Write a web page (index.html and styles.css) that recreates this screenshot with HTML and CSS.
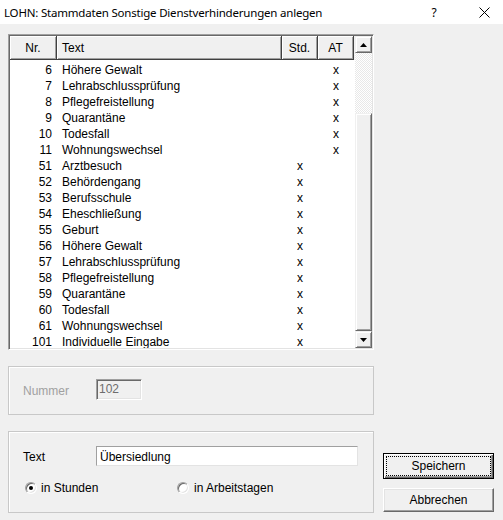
FILE: index.html
```html
<!DOCTYPE html>
<html lang="de">
<head>
<meta charset="utf-8">
<title>LOHN</title>
<link rel="stylesheet" href="styles.css">
</head>
<body>
<div class="titlebar">
  <div class="title">LOHN: Stammdaten Sonstige Dienstverhinderungen anlegen</div>
  <div class="help">?</div>
  <div class="close"><svg width="11" height="11" viewBox="0 0 11 11"><path d="M0.5 0.5 L10.5 10.5 M10.5 0.5 L0.5 10.5" stroke="#000" stroke-width="1" fill="none"/></svg></div>
</div>
<div class="dialog">
  <div class="left">
    <div class="listframe">
      <div class="list">
        <div class="hdr">
          <div class="hc c-nr">Nr.</div>
          <div class="hc c-text">Text</div>
          <div class="hc c-std">Std.</div>
          <div class="hc c-at">AT</div>
        </div>
        <div class="rows">
          <div class="row"><span class="c-nr">6</span><span class="c-text">Höhere Gewalt</span><span class="c-std"></span><span class="c-at">x</span></div>
          <div class="row"><span class="c-nr">7</span><span class="c-text">Lehrabschlussprüfung</span><span class="c-std"></span><span class="c-at">x</span></div>
          <div class="row"><span class="c-nr">8</span><span class="c-text">Pflegefreistellung</span><span class="c-std"></span><span class="c-at">x</span></div>
          <div class="row"><span class="c-nr">9</span><span class="c-text">Quarantäne</span><span class="c-std"></span><span class="c-at">x</span></div>
          <div class="row"><span class="c-nr">10</span><span class="c-text">Todesfall</span><span class="c-std"></span><span class="c-at">x</span></div>
          <div class="row"><span class="c-nr">11</span><span class="c-text">Wohnungswechsel</span><span class="c-std"></span><span class="c-at">x</span></div>
          <div class="row"><span class="c-nr">51</span><span class="c-text">Arztbesuch</span><span class="c-std">x</span><span class="c-at"></span></div>
          <div class="row"><span class="c-nr">52</span><span class="c-text">Behördengang</span><span class="c-std">x</span><span class="c-at"></span></div>
          <div class="row"><span class="c-nr">53</span><span class="c-text">Berufsschule</span><span class="c-std">x</span><span class="c-at"></span></div>
          <div class="row"><span class="c-nr">54</span><span class="c-text">Eheschließung</span><span class="c-std">x</span><span class="c-at"></span></div>
          <div class="row"><span class="c-nr">55</span><span class="c-text">Geburt</span><span class="c-std">x</span><span class="c-at"></span></div>
          <div class="row"><span class="c-nr">56</span><span class="c-text">Höhere Gewalt</span><span class="c-std">x</span><span class="c-at"></span></div>
          <div class="row"><span class="c-nr">57</span><span class="c-text">Lehrabschlussprüfung</span><span class="c-std">x</span><span class="c-at"></span></div>
          <div class="row"><span class="c-nr">58</span><span class="c-text">Pflegefreistellung</span><span class="c-std">x</span><span class="c-at"></span></div>
          <div class="row"><span class="c-nr">59</span><span class="c-text">Quarantäne</span><span class="c-std">x</span><span class="c-at"></span></div>
          <div class="row"><span class="c-nr">60</span><span class="c-text">Todesfall</span><span class="c-std">x</span><span class="c-at"></span></div>
          <div class="row"><span class="c-nr">61</span><span class="c-text">Wohnungswechsel</span><span class="c-std">x</span><span class="c-at"></span></div>
          <div class="row"><span class="c-nr">101</span><span class="c-text">Individuelle Eingabe</span><span class="c-std">x</span><span class="c-at"></span></div>
        </div>
      </div>
      <div class="vscroll">
        <div class="sbtn"><svg width="7" height="4" viewBox="0 0 7 4"><path d="M3.5 0 L7 4 L0 4 Z" fill="#000"/></svg></div>
        <div class="track track-top"></div>
        <div class="thumb"></div>
        <div class="sbtn"><svg width="7" height="4" viewBox="0 0 7 4"><path d="M0 0 L7 0 L3.5 4 Z" fill="#000"/></svg></div>
      </div>
    </div>

    <div class="group group-num">
      <span class="lbl disabled">Nummer</span>
      <div class="field field-num">102</div>
    </div>

    <div class="group group-text">
      <div class="line">
        <span class="lbl">Text</span>
        <div class="field field-text">Übersiedlung</div>
      </div>
      <div class="radios">
        <label class="radio r1"><span class="dot checked"></span>in Stunden</label>
        <label class="radio r2"><span class="dot"></span>in Arbeitstagen</label>
      </div>
    </div>
  </div>

  <div class="right">
    <div class="btn btn-default"><span class="focus">Speichern</span></div>
    <div class="btn">Abbrechen</div>
  </div>
</div>
</body>
</html>
```
FILE: styles.css
```css
html, body {
  margin: 0;
  padding: 0;
}
body {
  width: 503px;
  height: 520px;
  background: #f0f0f0;
  font-family: "Liberation Sans", Arial, sans-serif;
  font-size: 12px;
  color: #000;
  overflow: hidden;
}

.titlebar {
  height: 24px;
  background: #fff;
  display: flex;
  align-items: center;
}
.title {
  flex: 1;
  padding-left: 4px;
  font-family: "Noto Sans", "Liberation Sans", sans-serif;
  font-size: 11.5px;
  letter-spacing: -0.2px;
}
.help {
  width: 46px;
  text-align: center;
  font-family: "Noto Sans", sans-serif;
  font-size: 12px;
  padding-right: 8px;
}
.close {
  width: 38px;
  display: flex;
  justify-content: center;
}

.dialog {
  display: flex;
  padding: 10px 0 0 8px;
  gap: 9px;
}
.left {
  width: 366px;
  display: flex;
  flex-direction: column;
}

/* List */
.listframe {
  height: 316px;
  box-sizing: border-box;
  border-style: solid;
  border-width: 1px;
  border-color: #a0a0a0 #fff #fff #a0a0a0;
  display: flex;
  box-shadow: inset 1px 1px 0 #696969, inset -1px -1px 0 #e3e3e3;
  padding: 1px;
}
.list {
  width: 345px;
  background: #fff;
  display: flex;
  flex-direction: column;
  overflow: hidden;
}
.hdr {
  height: 24px;
  flex: none;
  display: flex;
  background: #f0f0f0;
}
.hc {
  box-sizing: border-box;
  height: 24px;
  line-height: 25px;
  border-right: 1px solid #404040;
  border-bottom: 1px solid #404040;
  box-shadow: inset 1px 1px 0 #fff, inset -1px -1px 0 #a0a0a0;
}
.c-nr { width: 47px; flex: none; box-sizing: border-box; }
.c-text { width: 225px; flex: none; box-sizing: border-box; }
.c-std { width: 36px; flex: none; box-sizing: border-box; text-align: center; }
.c-at { width: 36px; flex: none; box-sizing: border-box; text-align: center; }
.hc.c-nr { text-align: center; }
.hc.c-text { padding-left: 5px; }

.rows {
  flex: 1;
  padding-top: 2px;
  overflow: hidden;
}
.row {
  display: flex;
  height: 16px;
  line-height: 16px;
}
.row .c-nr { text-align: right; padding-right: 5px; }
.row .c-text { padding-left: 5px; }

.vscroll {
  width: 17px;
  display: flex;
  flex-direction: column;
}
.sbtn, .thumb {
  box-sizing: border-box;
  background: #f0f0f0;
  border-style: solid;
  border-width: 1px;
  border-color: #f0f0f0 #696969 #696969 #f0f0f0;
  box-shadow: inset 1px 1px 0 #fff, inset -1px -1px 0 #a0a0a0;
}
.sbtn {
  height: 17px;
  display: flex;
  align-items: center;
  justify-content: center;
}
.track {
  height: 60px;
  background-image: repeating-conic-gradient(#ffffff 0 25%, #e8e8e8 0 50%);
  background-size: 2px 2px;
}
.thumb {
  height: 218px;
}

/* Groups */
.group {
  box-sizing: border-box;
  border: 1px solid #c8c8c8;
  box-shadow: inset 1px 1px 0 #fff;
}
.group-num {
  margin-top: 16px;
  height: 49px;
  display: flex;
  align-items: center;
  padding-left: 14px;
}
.lbl {
  width: 73px;
  flex: none;
}
.disabled {
  color: #a0a0a0;
}
.field {
  box-sizing: border-box;
  border-style: solid;
  border-width: 1px;
  border-color: #a0a0a0 #fff #fff #a0a0a0;
  box-shadow: inset 1px 1px 0 #696969, inset -1px -1px 0 #e3e3e3;
  padding-left: 2px;
}
.field-num {
  width: 46px;
  height: 21px;
  line-height: 19px;
  color: #6d6d6d;
  background: #f0f0f0;
  margin-top: -2px;
}
.group-text {
  margin-top: 16px;
  height: 82px;
  padding: 14px 0 0 14px;
}
.line {
  display: flex;
  align-items: center;
}
.line .lbl {
  padding-top: 2px;
}
.field-text {
  width: 262px;
  height: 20px;
  line-height: 20px;
  background: #fff;
  padding-left: 3px;
  border-color: #a0a0a0 #e3e3e3 #e3e3e3 #a0a0a0;
  box-shadow: none;
}
.radios {
  display: flex;
  margin-top: 14px;
  padding-left: 2px;
}
.radio {
  display: flex;
  align-items: center;
  height: 16px;
}
.r1 { width: 152px; }
.dot {
  width: 12px;
  height: 12px;
  box-sizing: border-box;
  border-radius: 50%;
  background: #fff;
  border: 1px solid;
  border-color: #a0a0a0 #fff #fff #a0a0a0;
  box-shadow: inset 1px 1px 0 #696969, inset -1px -1px 0 #e3e3e3;
  margin-right: 4px;
  display: flex;
  align-items: center;
  justify-content: center;
}
.r2 .dot { margin-right: 5px; }
.dot.checked::after {
  content: "";
  width: 4px;
  height: 4px;
  border-radius: 50%;
  background: #000;
}

/* Buttons */
.right {
  width: 111px;
  display: flex;
  flex-direction: column;
  padding-top: 419px;
  gap: 9px;
}
.btn {
  box-sizing: border-box;
  height: 24px;
  display: flex;
  align-items: center;
  justify-content: center;
  background: #f0f0f0;
  border-style: solid;
  border-width: 1px;
  border-color: #fff #696969 #696969 #fff;
  box-shadow: inset -1px -1px 0 #a0a0a0, inset 1px 1px 0 #e3e3e3;
}
.btn-default {
  height: 26px;
  border: 1px solid #000;
  box-shadow: inset 1px 1px 0 #fff, inset -1px -1px 0 #696969, inset -2px -2px 0 #a0a0a0;
  padding: 3px;
}
.focus {
  flex: 1;
  align-self: stretch;
  display: flex;
  align-items: center;
  justify-content: center;
  outline: 1px dotted #000;
  outline-offset: 0;
}
```
